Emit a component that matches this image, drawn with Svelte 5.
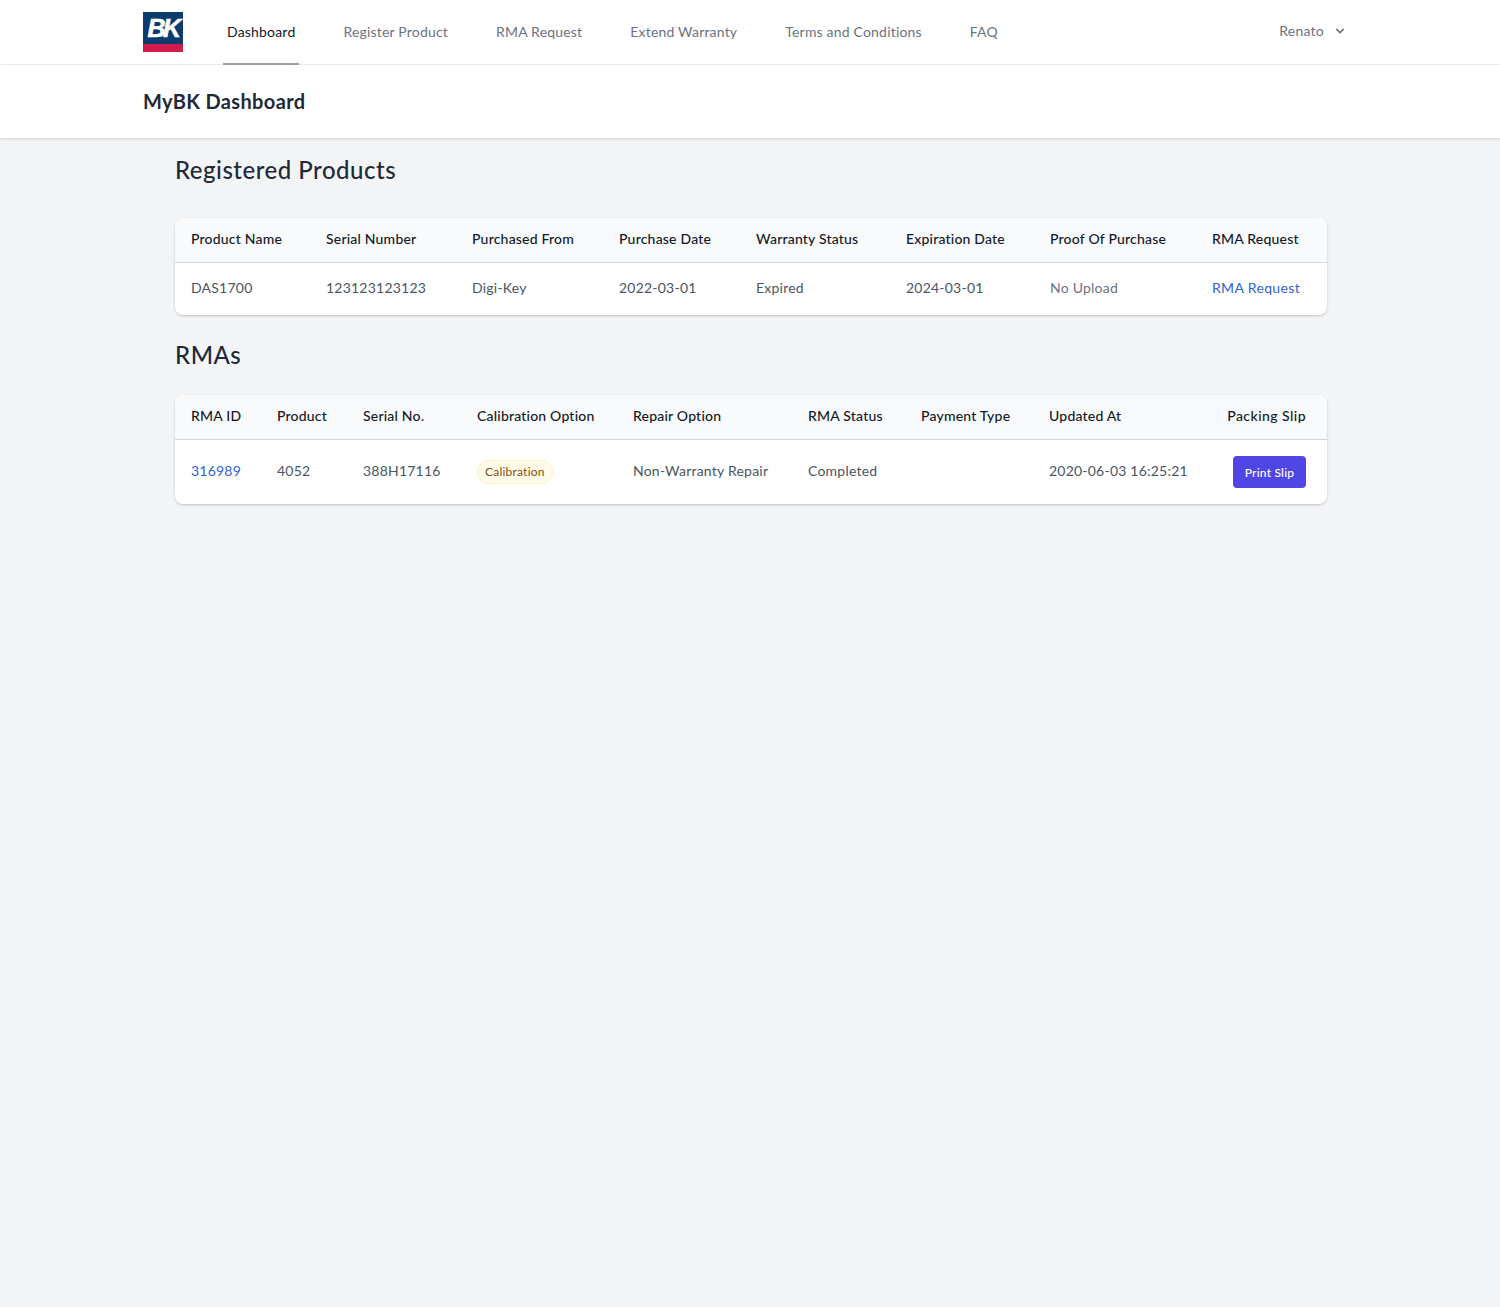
<script>
  const navItems = ["Dashboard", "Register Product", "RMA Request", "Extend Warranty", "Terms and Conditions", "FAQ"];

  const productCols = [135, 146, 147, 137, 150, 144, 162, 131];
  const productHeads = ["Product Name", "Serial Number", "Purchased From", "Purchase Date", "Warranty Status", "Expiration Date", "Proof Of Purchase", "RMA Request"];
  const product = ["DAS1700", "123123123123", "Digi-Key", "2022-03-01", "Expired", "2024-03-01"];

  const rmaCols = [86, 86, 114, 156, 175, 113, 128, 174];
  const rmaHeads = ["RMA ID", "Product", "Serial No.", "Calibration Option", "Repair Option", "RMA Status", "Payment Type", "Updated At"];
</script>

<div class="page">
  <header class="topbar">
    <div class="topbar-inner">
      <div class="logo">
        <span class="logo-text">BK</span>
        <span class="logo-stripe"></span>
      </div>
      <nav class="nav">
        {#each navItems as item, i}
          <a href="#top" class={i === 0 ? "nav-link active" : "nav-link"}>{item}</a>
        {/each}
      </nav>
      <div class="user">
        <span>Renato</span>
        <svg width="16" height="16" viewBox="0 0 20 20" fill="currentColor">
          <path fill-rule="evenodd" d="M5.293 7.293a1 1 0 011.414 0L10 10.586l3.293-3.293a1 1 0 111.414 1.414l-4 4a1 1 0 01-1.414 0l-4-4a1 1 0 010-1.414z" clip-rule="evenodd"></path>
        </svg>
      </div>
    </div>
  </header>

  <div class="subheader">
    <h1>MyBK Dashboard</h1>
  </div>

  <main class="content">
    <h2 class="first">Registered Products</h2>
    <div class="card">
      <table>
        <colgroup>
          {#each productCols as w}
            <col style="width: {w}px" />
          {/each}
        </colgroup>
        <thead>
          <tr>
            {#each productHeads as h}
              <th>{h}</th>
            {/each}
          </tr>
        </thead>
        <tbody>
          <tr class="row-product">
            {#each product as cell}
              <td>{cell}</td>
            {/each}
            <td class="muted">No Upload</td>
            <td><a href="#top" class="rma-link">RMA Request</a></td>
          </tr>
        </tbody>
      </table>
    </div>

    <h2 class="second">RMAs</h2>
    <div class="card">
      <table>
        <colgroup>
          {#each rmaCols as w}
            <col style="width: {w}px" />
          {/each}
          <col />
        </colgroup>
        <thead>
          <tr>
            {#each rmaHeads as h}
              <th>{h}</th>
            {/each}
            <th class="right">Packing Slip</th>
          </tr>
        </thead>
        <tbody>
          <tr class="row-rma">
            <td><a href="#top" class="id-link">316989</a></td>
            <td>4052</td>
            <td>388H17116</td>
            <td class="flush"><span class="badge">Calibration</span></td>
            <td>Non-Warranty Repair</td>
            <td>Completed</td>
            <td></td>
            <td>2020-06-03 16:25:21</td>
            <td class="right flush"><button class="print">Print Slip</button></td>
          </tr>
        </tbody>
      </table>
    </div>
  </main>
</div>

<style>
  :global(body) {
    margin: 0;
    background: #f3f4f6;
    font-family: "Lato", "Open Sans", sans-serif;
  }

  .page { min-height: 1307px; background: #f3f4f6; color: #1f2937; }

  /* top bar */
  .topbar { background: #fff; border-bottom: 1px solid #eef0f2; height: 64px; }
  .topbar-inner { display: flex; align-items: stretch; height: 64px; padding: 0 152px 0 143px; }

  .logo {
    align-self: center;
    display: flex;
    flex-direction: column;
    width: 40px;
    height: 40px;
    background: #0c3c6e;
    overflow: hidden;
  }
  .logo-text {
    flex: 1;
    color: #fff;
    font: italic 900 25px/32px "Liberation Sans", sans-serif;
    -webkit-text-stroke: 0.6px #fff;
    letter-spacing: -2.5px;
    text-align: center;
  }
  .logo-stripe { height: 8px; background: #d01c4b; }

  .nav { display: flex; gap: 40px; margin-left: 40px; }
  .nav-link {
    display: flex;
    align-items: center;
    padding: 0 4px;
    margin-bottom: -1px;
    border-bottom: 2px solid transparent;
    font-size: 14px;
    letter-spacing: 0.19px;
    color: #6b7280;
    text-decoration: none;
    box-sizing: border-box;
    height: 65px;
  }
  .nav-link.active { color: #111827; border-bottom-color: #9ca3af; }

  .user { margin-left: auto; display: flex; align-items: center; gap: 8px; font-size: 14px; letter-spacing: 0.25px; color: #6b7280; padding-bottom: 3px; }

  /* page title */
  .subheader {
    background: #fff;
    height: 73px;
    padding: 0 0 2px 143px;
    box-sizing: border-box;
    display: flex;
    align-items: center;
    box-shadow: 0 1px 3px rgba(0, 0, 0, 0.1), 0 1px 2px rgba(0, 0, 0, 0.06);
    position: relative;
  }
  h1 { margin: 0; font-size: 20px; font-weight: 700; line-height: 28px; letter-spacing: 0.35px; color: #1f2937; }

  .content { width: 1152px; margin-left: 175px; }
  h2 { margin: 0; font-size: 24px; font-weight: 500; line-height: 32px; letter-spacing: 0.5px; color: #1f2937; }
  h2.first { padding-top: 16px; padding-bottom: 32px; }
  h2.second { padding-top: 24px; padding-bottom: 24px; }

  .card {
    background: #fff;
    border-radius: 8px;
    overflow: hidden;
    box-shadow: 0 1px 3px rgba(0, 0, 0, 0.14), 0 1px 2px rgba(0, 0, 0, 0.08);
  }

  table { width: 100%; border-collapse: collapse; table-layout: fixed; font-size: 14px; }
  th {
    height: 44px;
    box-sizing: border-box;
    padding: 0 0 2px 16px;
    background: #f9fafb;
    border-bottom: 1px solid #d1d5db;
    font-weight: 500;
    letter-spacing: 0.2px;
    color: #111827;
    text-align: left;
    white-space: nowrap;
  }
  td { box-sizing: border-box; padding: 0 0 3px 16px; color: #4b5563; letter-spacing: 0.22px; white-space: nowrap; }
  td.flush { padding-top: 1px; padding-bottom: 0; }
  .row-product td { height: 53px; }
  .row-rma td { height: 65px; }
  th.right, td.right { text-align: right; padding-right: 21px; }
  th.right { letter-spacing: 0.45px; }
  .muted { color: #6b7280; }

  .rma-link { color: #2f5fdb; letter-spacing: 0.35px; text-decoration: none; }
  .id-link { color: #2f5fdb; text-decoration: none; }

  .badge {
    display: inline-block;
    padding: 0 7px;
    font-size: 12px;
    line-height: 22px;
    color: #854d0e;
    background: #fefce8;
    border: 1px solid #fdf0b8;
    border-radius: 12px;
  }
  .print {
    width: 73px;
    height: 32px;
    padding: 0;
    border: 0;
    border-radius: 4px;
    background: #4f46e5;
    color: #fff;
    font: 500 12px "Lato", sans-serif;
    letter-spacing: 0.2px;
    vertical-align: middle;
  }
</style>
